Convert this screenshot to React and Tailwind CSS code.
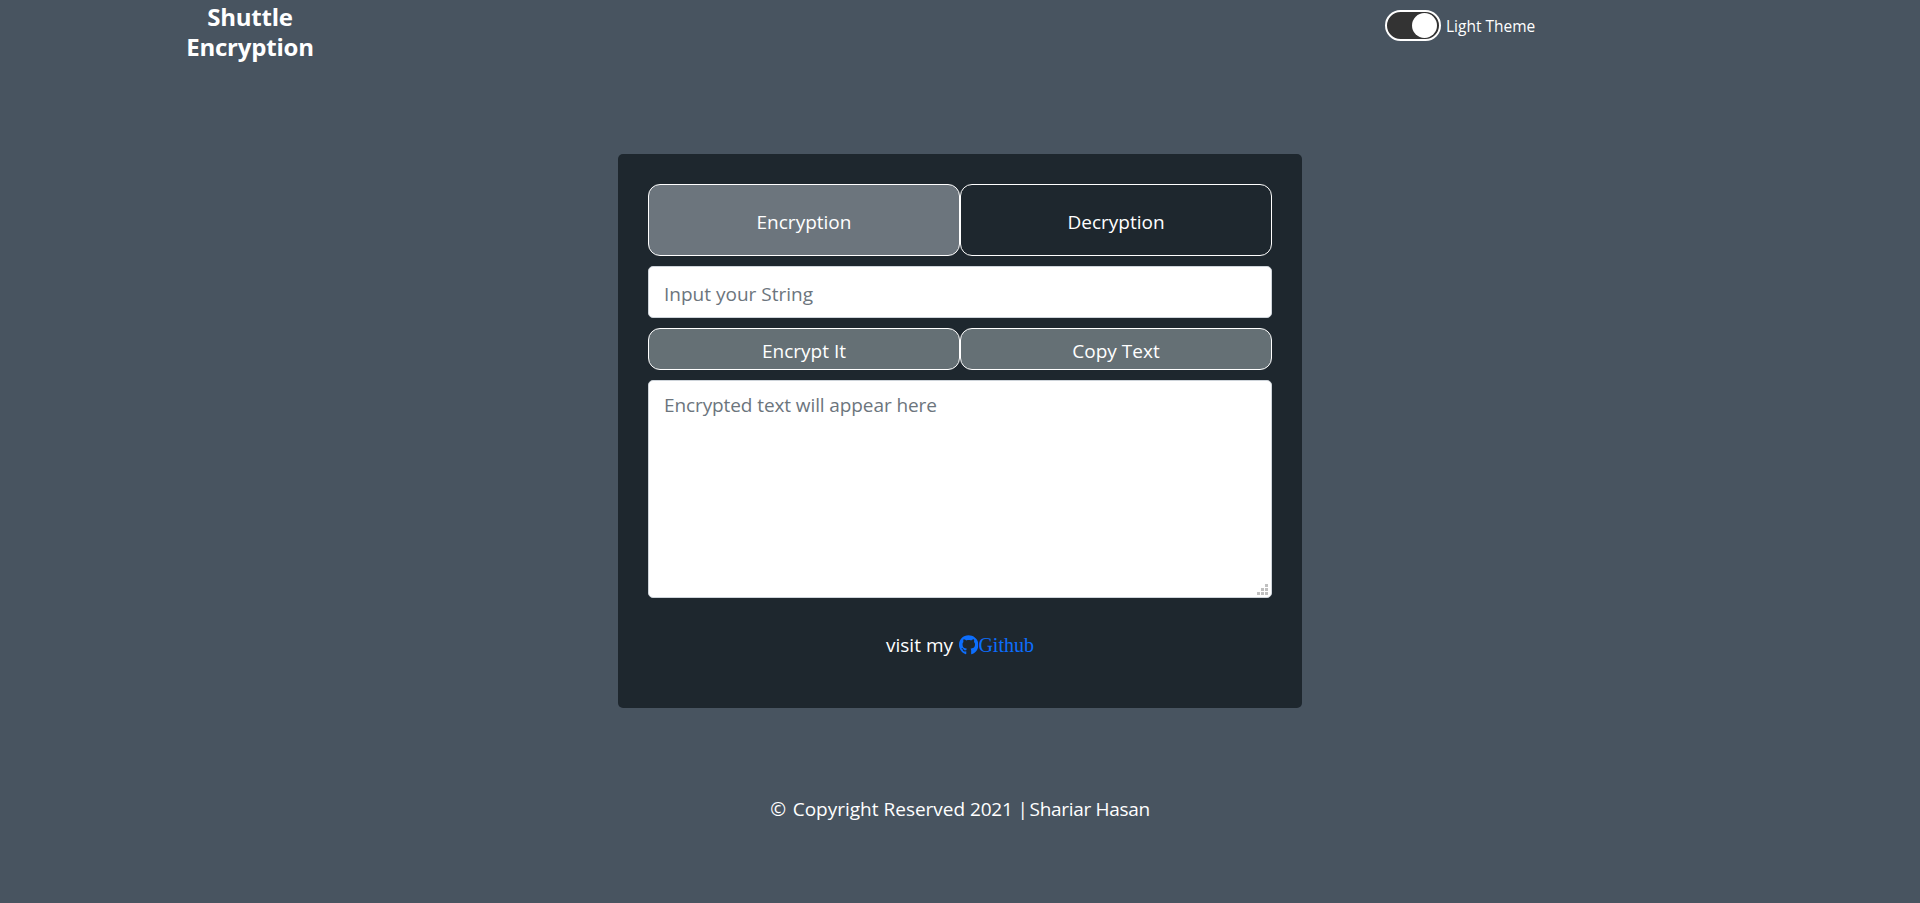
import { useState } from "react";

function GithubMark() {
  return (
    <svg viewBox="0 0 496 496" className="h-5 w-[19.4px] shrink-0" fill="currentColor" aria-hidden="true">
      <path
        transform="translate(0 -8)"
        d="M165.9 397.4c0 2-2.3 3.6-5.2 3.6-3.3.3-5.6-1.3-5.6-3.6 0-2 2.3-3.6 5.2-3.6 3-.3 5.6 1.3 5.6 3.6zm-31.1-4.5c-.7 2 1.3 4.3 4.3 4.9 2.6 1 5.6 0 6.2-2s-1.3-4.3-4.3-5.2c-2.6-.7-5.5.3-6.2 2.3zm44.2-1.7c-2.9.7-4.9 2.6-4.6 4.9.3 2 2.9 3.3 5.9 2.6 2.9-.7 4.9-2.6 4.6-4.6-.3-1.9-3-3.2-5.9-2.9zM244.8 8C106.1 8 0 113.3 0 252c0 110.9 69.8 205.8 169.5 239.2 12.8 2.3 17.3-5.6 17.3-12.1 0-6.2-.3-40.4-.3-61.4 0 0-70 15-84.7-29.8 0 0-11.4-29.1-27.8-36.6 0 0-22.9-15.7 1.6-15.4 0 0 24.9 2 38.6 25.8 21.9 38.6 58.6 27.5 72.9 20.9 2.3-16 8.8-27.1 16-33.7-55.9-6.2-112.3-14.3-112.3-110.5 0-27.5 7.6-41.3 23.6-58.9-2.6-6.5-11.1-33.3 2.6-67.9 20.9-6.5 69 27 69 27 20-5.6 41.5-8.5 62.8-8.5s42.8 2.9 62.8 8.5c0 0 48.1-33.6 69-27 13.7 34.7 5.2 61.4 2.6 67.9 16 17.7 25.8 31.5 25.8 58.9 0 96.5-58.9 104.2-114.8 110.5 9.2 7.9 17 22.9 17 46.4 0 33.7-.3 75.4-.3 83.6 0 6.5 4.6 14.4 17.3 12.1C428.2 457.8 496 362.9 496 252 496 113.3 383.5 8 244.8 8z"
      />
    </svg>
  );
}

export default function App() {
  const [on, setOn] = useState(true);
  const action =
    "flex h-[42px] flex-1 items-center justify-center rounded-xl border border-white bg-[#657075] pt-[5px] leading-none";
  return (
    <div className="flex min-h-screen flex-col items-center bg-[#485460] font-['Open_Sans','Noto_Sans',sans-serif] text-[19px] text-white">
      <header className="flex h-[154px] w-full justify-between pr-[384px] pl-[170px]">
        <h1 className="w-40 pt-0.5 text-center text-2xl leading-[30px] font-bold tracking-[-0.2px]">
          Shuttle
          <br />
          Encryption
        </h1>
        <div className="mt-[10px] flex h-[31px] items-center gap-[5px]">
          <button
            onClick={() => setOn(!on)}
            className={`flex h-[31px] w-14 items-center rounded-full border-2 border-white bg-[#333] px-0.5 ${on ? "justify-end" : "justify-start"}`}
          >
            <span className="size-[25px] rounded-full bg-white" />
          </button>
          <span className="w-[90px] pt-0.5 text-[15.5px] leading-none whitespace-nowrap">Light Theme</span>
        </div>
      </header>

      <main className="flex h-[554px] w-[684px] flex-col rounded-[5px] bg-[#1e272e] p-[30px]">
        <div className="flex">
          <button className="flex h-[72px] flex-1 items-center justify-center rounded-xl border border-white bg-[#6c757d] pt-1">
            Encryption
          </button>
          <button className="flex h-[72px] flex-1 items-center justify-center rounded-xl border border-white pt-1">
            Decryption
          </button>
        </div>
        <input
          placeholder="Input your String"
          className="mt-2.5 h-[52px] w-full rounded-[5px] border border-[#ced4da] bg-white px-[15px] pt-1 placeholder:text-[#6c757d]"
        />
        <div className="mt-2.5 flex">
          <button className={action}>Encrypt It</button>
          <button className={action}>Copy Text</button>
        </div>
        <div className="relative mt-2.5 h-[218px]">
          <textarea
            placeholder="Encrypted text will appear here"
            className="block h-full w-full resize-none rounded-[5px] border border-[#ced4da] bg-white px-[15px] pt-[9px] leading-[30px] tracking-[-0.1px] placeholder:text-[#6c757d]"
          />
          <svg className="absolute right-1 bottom-[3px] h-[11px] w-[11px]" viewBox="0 0 11 11" fill="#c0c0c0">
            <path d="M0 8h3v3H0zM4 8h3v3H4zM8 8h3v3H8zM4 4h3v3H4zM8 4h3v3H8zM8 0h3v3H8z" />
          </svg>
        </div>
        <p className="mt-8 flex h-[30px] items-center justify-center">
          <span className="mr-1.5">visit my</span>
          <a href="#github" className="flex items-center font-['Liberation_Serif',serif] text-xl leading-[30px] text-[#0d6efd]">
            <GithubMark />
            Github
          </a>
        </p>
      </main>

      <footer className="mt-[86px] leading-[30px] tracking-[-0.16px]">
        <span className="mr-0.5">©</span> <span className="tracking-normal">Copyright Reserved</span> 2021 |{" "}
        <span className="-ml-[3px] tracking-[-0.32px]">Shariar Hasan</span>
      </footer>
    </div>
  );
}
